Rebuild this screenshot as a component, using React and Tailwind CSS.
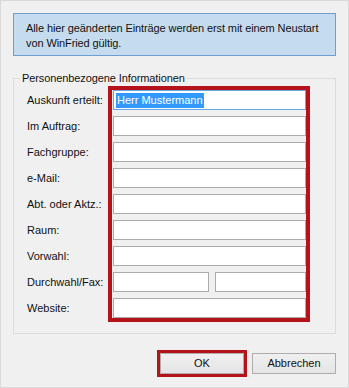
import React from "react";

const labels = [
  "Auskunft erteilt:",
  "Im Auftrag:",
  "Fachgruppe:",
  "e-Mail:",
  "Abt. oder Aktz.:",
  "Raum:",
  "Vorwahl:",
  "Durchwahl/Fax:",
  "Website:",
];

const font = { fontFamily: '"Liberation Sans", Arial, sans-serif' };

function Field({ className = "" }) {
  return <div className={"h-[20px] border border-[#ababab] bg-white " + className} />;
}

export default function App() {
  return (
    <div
      className="w-[349px] h-[388px] border border-[#d9d9d9] bg-[#f0f0f0] flex flex-col px-[12px] pt-[12px] text-[11px] text-[#111]"
      style={font}
    >
      <div className="h-[43px] border border-[#6f9fd0] bg-[#c5dcef] pl-[12px] pt-[7px] leading-[15px] whitespace-nowrap tracking-[-0.1px]">
        Alle hier geänderten Einträge werden erst mit einem Neustart
        <br />
        von WinFried gültig.
      </div>

      <div className="relative mt-[22px] h-[256px] border border-[#dcdcdc] pl-[13px] pt-[7px]">
        <span className="absolute left-[6px] top-[-8px] bg-[#f0f0f0] px-[2px] leading-[15px] tracking-[-0.1px]">
          Personenbezogene Informationen
        </span>
        <div className="flex">
          <div className="w-[81px] flex flex-col gap-[6px] pt-[4px]">
            {labels.map((l) => (
              <div key={l} className="h-[20px] flex items-center leading-none">
                {l}
              </div>
            ))}
          </div>
          <div className="w-[202px] border-4 border-[#b5121b] flex flex-col gap-[6px] pl-[1px]">
            <div className="h-[20px] border border-[#6aa6e2] bg-white flex items-center pl-[2px]">
              <span className="bg-[#3399ff] text-white leading-[15px] px-[1px]">Herr Mustermann</span>
            </div>
            <Field />
            <Field />
            <Field />
            <Field />
            <Field />
            <Field />
            <div className="flex gap-[6px]">
              <Field className="w-[96px]" />
              <Field className="flex-1" />
            </div>
            <Field />
          </div>
        </div>
      </div>

      <div className="flex justify-end gap-[5px] mt-[16px]">
        <div className="border-[3px] border-[#b5121b]">
          <button className="w-[84px] h-[21px] border border-[#adadad] bg-gradient-to-b from-[#f0f0f0] to-[#e5e5e5] flex items-center justify-center leading-none">
            OK
          </button>
        </div>
        <button className="mt-[3px] w-[84px] h-[21px] border border-[#adadad] bg-gradient-to-b from-[#f0f0f0] to-[#e5e5e5] flex items-center justify-center leading-none">
          Abbrechen
        </button>
      </div>
    </div>
  );
}
